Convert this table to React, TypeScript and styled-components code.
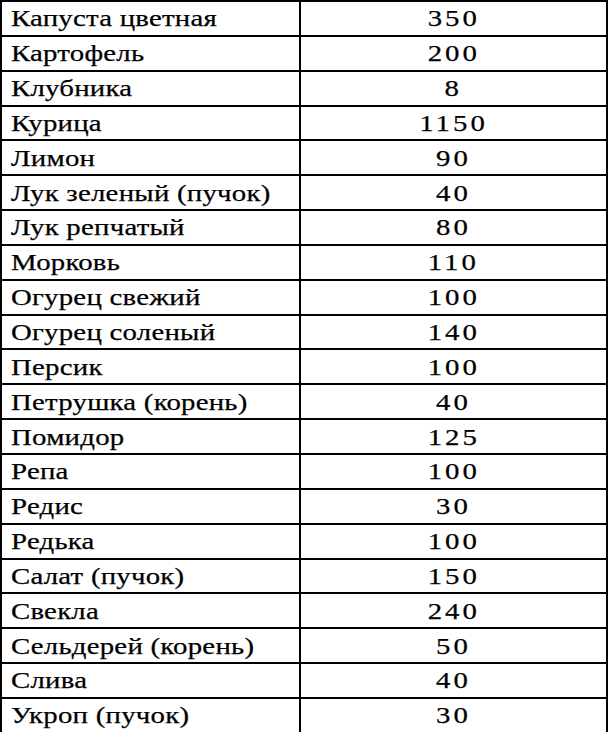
import React from 'react';
import styled, { createGlobalStyle } from 'styled-components';

const GlobalStyle = createGlobalStyle`
  html, body {
    margin: 0;
    padding: 0;
    background: #ffffff;
  }
`;

const Table = styled.table`
  width: 608px;
  height: 732px;
  border-collapse: collapse;
  table-layout: fixed;
  font-family: 'Liberation Serif', 'Times New Roman', serif;
  font-size: 24px;
  color: #000;
`;

const Row = styled.tr`
  height: 34.85px;
`;

const NameCell = styled.td`
  border: 2px solid #000;
  padding: 0 0 0 9px;
  text-align: left;
  vertical-align: middle;
  white-space: nowrap;
  line-height: 1;
`;

const ValueCell = styled(NameCell)`
  padding: 0;
  text-align: center;
`;

// the source is set in a wide schoolbook face, so stretch the text sideways
const Text = styled.span<{ $digits?: boolean }>`
  display: inline-block;
  transform: scaleX(1.2);
  transform-origin: ${(p) => (p.$digits ? 'center' : 'left')} center;
  letter-spacing: ${(p) => (p.$digits ? '2.5px' : '0.2px')};
  -webkit-text-stroke: 0.25px #000;
`;

const rows: [string, string][] = [
  ['Капуста цветная', '350'],
  ['Картофель', '200'],
  ['Клубника', '8'],
  ['Курица', '1150'],
  ['Лимон', '90'],
  ['Лук зеленый (пучок)', '40'],
  ['Лук репчатый', '80'],
  ['Морковь', '110'],
  ['Огурец свежий', '100'],
  ['Огурец соленый', '140'],
  ['Персик', '100'],
  ['Петрушка (корень)', '40'],
  ['Помидор', '125'],
  ['Репа', '100'],
  ['Редис', '30'],
  ['Редька', '100'],
  ['Салат (пучок)', '150'],
  ['Свекла', '240'],
  ['Сельдерей (корень)', '50'],
  ['Слива', '40'],
  ['Укроп (пучок)', '30'],
];

function App() {
  return (
    <>
      <GlobalStyle />
      <Table>
        <colgroup>
          <col style={{ width: '299px' }} />
          <col />
        </colgroup>
        <tbody>
          {rows.map(([name, value]) => (
            <Row key={name}>
              <NameCell>
                <Text>{name}</Text>
              </NameCell>
              <ValueCell>
                <Text $digits>{value}</Text>
              </ValueCell>
            </Row>
          ))}
        </tbody>
      </Table>
    </>
  );
}

export default App;
